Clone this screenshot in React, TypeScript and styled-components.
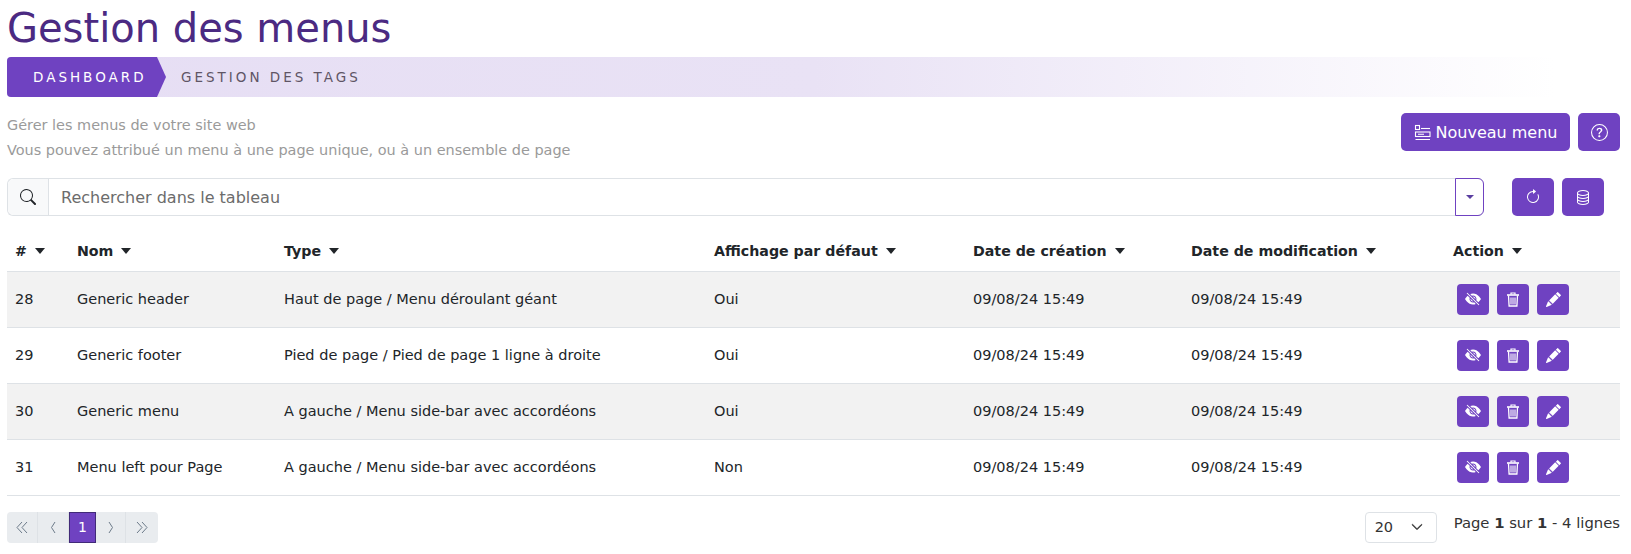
import React from "react";
import styled, { createGlobalStyle } from "styled-components";
import {
  BsArrowClockwise,
  BsChevronDown,
  BsDatabase,
  BsEyeSlashFill,
  BsPencilFill,
  BsQuestionCircle,
  BsSearch,
} from "react-icons/bs";

const purple = "#6f42c1";

const GlobalStyle = createGlobalStyle`
  body {
    margin: 0;
    background: #fff;
    font-family: "DejaVu Sans", Verdana, sans-serif;
    font-size: 14px;
    color: #212529;
  }
`;

const Page = styled.div`
  padding: 0 11px 0 7px;
`;

const Title = styled.h1`
  margin: 0;
  height: 57px;
  font-size: 40px;
  line-height: 56px;
  font-weight: 400;
  color: #4b2a82;
`;

const Breadcrumb = styled.nav`
  display: flex;
  align-items: center;
  height: 40px;
  border-radius: 4px;
  background: linear-gradient(90deg, #e6def4 0%, #e9e2f5 50%, #ffffff 96%);
  letter-spacing: 3px;
  font-size: 13.5px;
`;

const CrumbActive = styled.div`
  width: 159px;
  height: 40px;
  flex-shrink: 0;
  padding: 0 0 0 26px;
  box-sizing: border-box;
  display: flex;
  align-items: center;
  color: #fff;
  background: ${purple};
  border-radius: 4px 0 0 4px;
  clip-path: polygon(0 0, 150px 0, 159px 50%, 150px 100%, 0 100%);
`;

const Crumb = styled.div`
  margin-left: 15px;
  color: #5f5565;
`;

const IntroRow = styled.div`
  display: flex;
  justify-content: space-between;
  margin-top: 16px;
  height: 65px;
`;

const Intro = styled.div`
  color: #9a9a9a;
  font-size: 14.45px;
  line-height: 25px;
`;

const ButtonRow = styled.div`
  display: flex;
  gap: 8px;
`;

const PurpleButton = styled.button<{ $w: number; $h?: number }>`
  display: inline-flex;
  align-items: center;
  justify-content: center;
  gap: 5px;
  width: ${(p) => p.$w}px;
  height: ${(p) => p.$h ?? 38}px;
  padding: 0;
  border: 0;
  border-radius: ${(p) => (p.$h ? 4 : 5)}px;
  background: ${purple};
  color: #fff;
  font-family: inherit;
  font-size: 16px;
`;

const SearchRow = styled.div`
  display: flex;
  height: 38px;
`;

const SearchBox = styled.div`
  display: flex;
  width: 1477px;
  box-sizing: border-box;
  border: 1px solid #dee2e6;
  border-right: 0;
  border-radius: 6px;
`;

const SearchAddon = styled.div`
  width: 40px;
  display: flex;
  align-items: center;
  justify-content: center;
  background: #f8f9fa;
  border-right: 1px solid #dee2e6;
  border-radius: 6px 0 0 6px;
`;

const SearchText = styled.div`
  flex: 1;
  padding: 1px 0 0 12px;
  line-height: 36px;
  font-size: 16px;
  color: #6c6c6c;
`;

const SearchCaret = styled.div`
  width: 27px;
  margin: -1px 0;
  display: flex;
  align-items: center;
  justify-content: center;
  border: 1px solid ${purple};
  border-radius: 0 6px 6px 0;
`;

const Caret = styled.span<{ $color?: string; $height?: number; $side?: number }>`
  display: inline-block;
  border-style: solid;
  border-width: ${(p) => p.$height ?? 6}px ${(p) => p.$side ?? 5}px 0;
  border-color: ${(p) => p.$color ?? "#212529"} transparent transparent;
`;

const ToolButtons = styled.div`
  display: flex;
  gap: 8px;
  margin-left: 28px;
`;

const Table = styled.table`
  width: 100%;
  margin-top: 16px;
  border-collapse: collapse;
  table-layout: fixed;
`;

const Head = styled.th<{ $w?: number }>`
  box-sizing: border-box;
  width: ${(p) => (p.$w ? `${p.$w}px` : "auto")};
  height: 39px;
  padding: 0 0 0 8px;
  text-align: left;
  font-size: 14.2px;
  font-weight: 700;
  border-bottom: 1px solid #dee2e6;
  ${Caret} {
    margin-left: 8px;
    vertical-align: 2px;
  }
`;

const Row = styled.tr<{ $odd: boolean }>`
  background: ${(p) => (p.$odd ? "#f2f2f2" : "#fff")};
`;

const Cell = styled.td`
  height: 55px;
  padding: 0 0 0 8px;
  font-size: 14.5px;
  border-bottom: 1px solid #dee2e6;
`;

const Actions = styled.div`
  display: flex;
  gap: 8px;
  margin-left: 4px;
`;

const FooterRow = styled.div`
  display: flex;
  align-items: flex-start;
  margin-top: 16px;
`;

const Pager = styled.div`
  display: flex;
  height: 31px;
  border-radius: 4px;
  overflow: hidden;
  background: #e9ecef;
  margin-right: auto;
`;

const PagerItem = styled.div<{ $w: number; $active?: boolean }>`
  width: ${(p) => p.$w}px;
  box-sizing: border-box;
  display: flex;
  align-items: center;
  justify-content: center;
  color: ${(p) => (p.$active ? "#fff" : "#6c7a89")};
  background: ${(p) => (p.$active ? purple : "transparent")};
  border: ${(p) => (p.$active ? "1px solid #412a78" : "0")};
  border-right: ${(p) => (p.$active ? "1px solid #412a78" : "1px solid #dee2e6")};
  font-size: 14px;
  &:last-child {
    border-right: 0;
  }
`;

const PageSize = styled.div`
  width: 72px;
  height: 31px;
  box-sizing: border-box;
  display: flex;
  align-items: center;
  justify-content: space-between;
  padding: 0 13px 0 9px;
  border: 1px solid #dee2e6;
  border-radius: 4px;
  font-size: 14.5px;
  color: #333;
`;

const Chevron = styled(BsChevronDown)`
  stroke: currentColor;
  stroke-width: 1px;
`;

const PageInfo = styled.div`
  margin-left: 17px;
  line-height: 22px;
  font-size: 14.8px;
  color: #333;
`;

const MenuIcon = () => (
  <svg width="17" height="17" viewBox="0 0 17 17" fill="none" stroke="currentColor" strokeWidth="1.1">
    <rect x="1.5" y="1.5" width="4" height="4" />
    <path d="M7 4.5h9" />
    <rect x="1.5" y="8" width="14.5" height="4.5" />
    <path d="M4 10.2h6M1.5 15.5h14.5" />
  </svg>
);

const TrashIcon = () => (
  <svg width="14" height="15" viewBox="0 0 14 15" fill="none" stroke="currentColor">
    <path d="M1 3h12" strokeWidth="1.6" />
    <path d="M5 2.5V1h4v1.5" strokeWidth="1.2" />
    <path d="M2.5 3.5l.6 10.5h7.8l.6-10.5" strokeWidth="1.3" />
    <path d="M5 5.5v7M7 5.5v7M9 5.5v7" strokeWidth="1.1" />
  </svg>
);

const rows = [
  ["28", "Generic header", "Haut de page / Menu déroulant géant", "Oui"],
  ["29", "Generic footer", "Pied de page / Pied de page 1 ligne à droite", "Oui"],
  ["30", "Generic menu", "A gauche / Menu side-bar avec accordéons", "Oui"],
  ["31", "Menu left pour Page", "A gauche / Menu side-bar avec accordéons", "Non"],
];

const columns: [string, number | undefined][] = [
  ["#", 62],
  ["Nom", 207],
  ["Type", 430],
  ["Affichage par défaut", 259],
  ["Date de création", 218],
  ["Date de modification", 262],
  ["Action", undefined],
];

const DoubleLeft = () => (
  <svg width="12" height="13" viewBox="0 0 12 13" fill="none" stroke="currentColor">
    <path d="M6 1L1 6.5 6 12M11 1L6 6.5 11 12" />
  </svg>
);

const SingleLeft = () => (
  <svg width="6" height="13" viewBox="0 0 6 13" fill="none" stroke="currentColor">
    <path d="M5 1L1.5 6.5 5 12" />
  </svg>
);

const SingleRight = () => (
  <svg width="6" height="13" viewBox="0 0 6 13" fill="none" stroke="currentColor">
    <path d="M1 1l3.5 5.5L1 12" />
  </svg>
);

const DoubleRight = () => (
  <svg width="12" height="13" viewBox="0 0 12 13" fill="none" stroke="currentColor">
    <path d="M1 1l5 5.5L1 12M6 1l5 5.5L6 12" />
  </svg>
);

export default function App() {
  return (
    <Page>
      <GlobalStyle />
      <Title>Gestion des menus</Title>
      <Breadcrumb>
        <CrumbActive>DASHBOARD</CrumbActive>
        <Crumb>GESTION DES TAGS</Crumb>
      </Breadcrumb>
      <IntroRow>
        <Intro>
          Gérer les menus de votre site web
          <br />
          Vous pouvez attribué un menu à une page unique, ou à un ensemble de page
        </Intro>
        <ButtonRow>
          <PurpleButton $w={169}>
            <MenuIcon />
            Nouveau menu
          </PurpleButton>
          <PurpleButton $w={42}>
            <BsQuestionCircle size={17} />
          </PurpleButton>
        </ButtonRow>
      </IntroRow>
      <SearchRow>
        <SearchBox>
          <SearchAddon>
            <BsSearch size={16} />
          </SearchAddon>
          <SearchText>Rechercher dans le tableau</SearchText>
          <SearchCaret>
            <Caret $color="#5a3ea0" $height={4} $side={4} />
          </SearchCaret>
        </SearchBox>
        <ToolButtons>
          <PurpleButton $w={42}>
            <BsArrowClockwise size={16} />
          </PurpleButton>
          <PurpleButton $w={42}>
            <BsDatabase size={16} />
          </PurpleButton>
        </ToolButtons>
      </SearchRow>
      <Table>
        <thead>
          <tr>
            {columns.map(([label, width]) => (
              <Head key={label} $w={width}>
                {label}
                <Caret />
              </Head>
            ))}
          </tr>
        </thead>
        <tbody>
          {rows.map((row, i) => (
            <Row key={row[0]} $odd={i % 2 === 0}>
              {row.map((value, j) => (
                <Cell key={j}>{value}</Cell>
              ))}
              <Cell>09/08/24 15:49</Cell>
              <Cell>09/08/24 15:49</Cell>
              <Cell>
                <Actions>
                  <PurpleButton $w={32} $h={31}>
                    <BsEyeSlashFill size={16} />
                  </PurpleButton>
                  <PurpleButton $w={32} $h={31}>
                    <TrashIcon />
                  </PurpleButton>
                  <PurpleButton $w={32} $h={31}>
                    <BsPencilFill size={15} />
                  </PurpleButton>
                </Actions>
              </Cell>
            </Row>
          ))}
        </tbody>
      </Table>
      <FooterRow>
        <Pager>
          <PagerItem $w={31}>
            <DoubleLeft />
          </PagerItem>
          <PagerItem $w={31}>
            <SingleLeft />
          </PagerItem>
          <PagerItem $w={27} $active>
            1
          </PagerItem>
          <PagerItem $w={30}>
            <SingleRight />
          </PagerItem>
          <PagerItem $w={32}>
            <DoubleRight />
          </PagerItem>
        </Pager>
        <PageSize>
          20
          <Chevron size={12} />
        </PageSize>
        <PageInfo>
          Page <b>1</b> sur <b>1</b> - 4 lignes
        </PageInfo>
      </FooterRow>
    </Page>
  );
}
